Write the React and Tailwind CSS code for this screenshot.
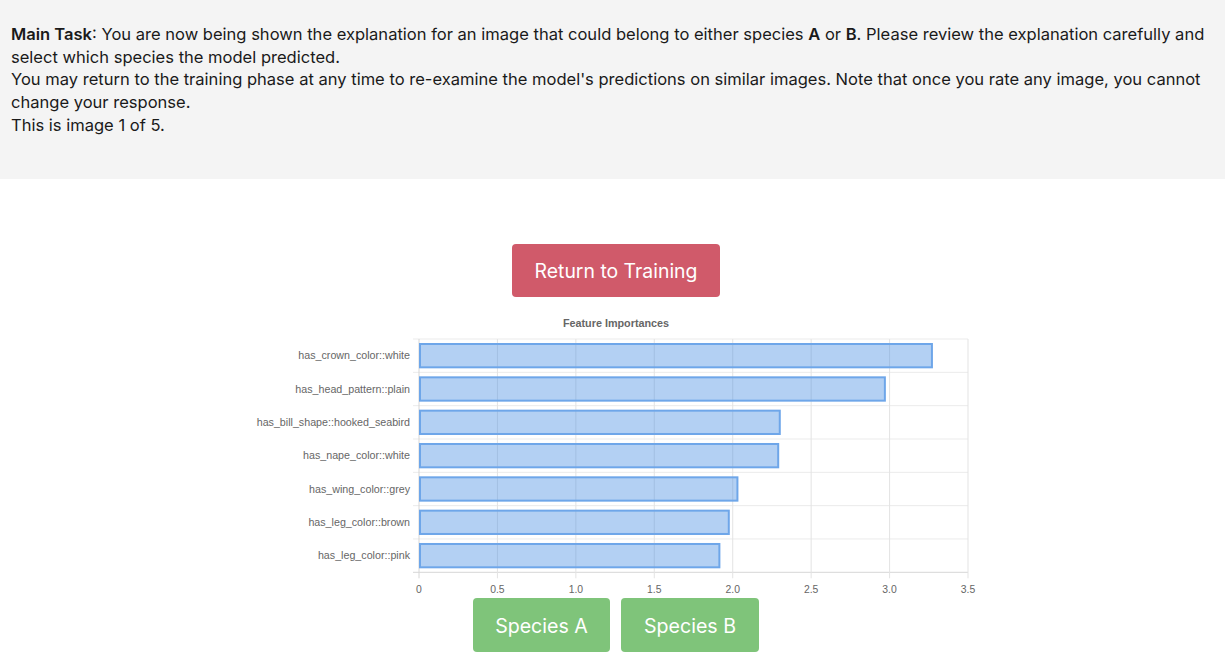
import React from "react";

const data = [
  ["has_crown_color::white", 3.27],
  ["has_head_pattern::plain", 2.97],
  ["has_bill_shape::hooked_seabird", 2.3],
  ["has_nape_color::white", 2.29],
  ["has_wing_color::grey", 2.03],
  ["has_leg_color::brown", 1.975],
  ["has_leg_color::pink", 1.915],
];

function Chart() {
  const x0 = 178;
  const unit = 156.86;
  const top = 29;
  const rowH = 33.33;
  const bottom = top + rowH * 7;
  const ticks = [0, 0.5, 1, 1.5, 2, 2.5, 3, 3.5];
  const font = "'Liberation Sans', Arial, sans-serif";
  return (
    <svg width="750" height="288" viewBox="0 0 750 288" className="block">
      <text x={375} y={17} textAnchor="middle" fontFamily={font} fontSize="10.8" fontWeight="bold" fill="#666">
        Feature Importances
      </text>
      {Array.from({ length: 8 }).map((_, i) => (
        <line key={"h" + i} x1={x0 - 6} x2={x0 + 3.5 * unit} y1={top + i * rowH} y2={top + i * rowH} stroke={i === 7 ? "#d6d6d6" : "#ebebeb"} strokeWidth="1" />
      ))}
      {ticks.map((t, i) => (
        <g key={"v" + i}>
          <line x1={x0 + t * unit} x2={x0 + t * unit} y1={top} y2={bottom + 6} stroke={i === 0 ? "#d6d6d6" : "#e3e3e3"} strokeWidth="1" />
          <text x={x0 + t * unit} y={bottom + 21} textAnchor="middle" fontFamily={font} fontSize="10.4" fill="#666">
            {t === 0 ? "0" : t.toFixed(1)}
          </text>
        </g>
      ))}
      {data.map(([label, v], i) => {
        const y = top + i * rowH;
        return (
          <g key={label}>
            <rect
              x={x0 + 1}
              y={y + 5}
              width={v * unit - 1}
              height={rowH - 10}
              fill="#4a90e2"
              fillOpacity="0.42"
              stroke="#6ea6e9"
              strokeWidth="2"
            />
            <text x={169} y={y + rowH / 2 + 3.8} textAnchor="end" fontFamily={font} fontSize="10.7" fill="#666">
              {label}
            </text>
          </g>
        );
      })}
    </svg>
  );
}

export default function App() {
  return (
    <div className="w-[1225px] min-h-[666px] bg-white text-[#1a1a1a]" style={{ fontFamily: "Inter, 'Noto Sans', sans-serif" }}>
      <div className="bg-[#f4f4f4] h-[179px] px-[11px] pt-[23px] text-[16.55px] leading-[22.7px]">
        <p>
          <b className="font-semibold">Main Task</b>: You are now being shown the explanation for an image that could belong to either species{" "}
          <b className="font-semibold">A</b> or <b className="font-semibold">B</b>. Please review the explanation carefully and select which species the model predicted.
        </p>
        <p>
          You may return to the training phase at any time to re-examine the model's predictions on similar images. Note that once you rate any image, you cannot change your response.
        </p>
        <p>This is image 1 of 5.</p>
      </div>
      <div className="flex flex-col items-center pl-[7px] pt-[65px]">
        <button className="w-[208px] h-[53px] pt-[2px] rounded bg-[#d05a6a] text-white text-[19.4px]">Return to Training</button>
        <div className="mt-[13px]">
          <Chart />
        </div>
        <div className="flex gap-[11px]">
          <button className="w-[137px] h-[54px] pt-[3px] rounded bg-[#7fc47a] text-white text-[19.6px]">Species A</button>
          <button className="w-[138px] h-[54px] pt-[3px] rounded bg-[#7fc47a] text-white text-[19.6px]">Species B</button>
        </div>
      </div>
    </div>
  );
}
